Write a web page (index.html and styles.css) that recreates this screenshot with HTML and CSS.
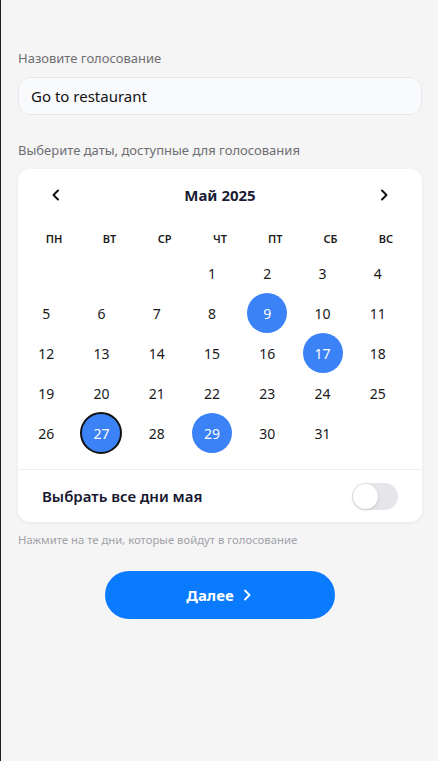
FILE: index.html
```html
<!DOCTYPE html>
<html lang="ru">
<head>
<meta charset="utf-8">
<title>Голосование</title>
<link rel="stylesheet" href="styles.css">
</head>
<body>
<div class="page">
  <div class="label">Назовите голосование</div>
  <div class="input">Go to restaurant</div>
  <div class="label label-2">Выберите даты, доступные для голосования</div>
  <div class="card">
    <div class="cal-head">
      <svg class="arrow" width="16" height="16" viewBox="0 0 16 16"><path d="M10 3.5 L5.5 8 L10 12.5" fill="none" stroke="#111" stroke-width="2" stroke-linecap="round" stroke-linejoin="round"/></svg>
      <div class="month">Май 2025</div>
      <svg class="arrow" width="16" height="16" viewBox="0 0 16 16"><path d="M6 3.5 L10.5 8 L6 12.5" fill="none" stroke="#111" stroke-width="2" stroke-linecap="round" stroke-linejoin="round"/></svg>
    </div>
    <div class="weekdays">
      <span>ПН</span><span>ВТ</span><span>СР</span><span>ЧТ</span><span>ПТ</span><span>СБ</span><span>ВС</span>
    </div>
    <div class="days">
      <span></span><span></span><span></span>
      <span class="day">1</span><span class="day">2</span><span class="day">3</span><span class="day">4</span>
      <span class="day">5</span><span class="day">6</span><span class="day">7</span><span class="day">8</span><span class="day sel">9</span><span class="day">10</span><span class="day">11</span>
      <span class="day">12</span><span class="day">13</span><span class="day">14</span><span class="day">15</span><span class="day">16</span><span class="day sel">17</span><span class="day">18</span>
      <span class="day">19</span><span class="day">20</span><span class="day">21</span><span class="day">22</span><span class="day">23</span><span class="day">24</span><span class="day">25</span>
      <span class="day">26</span><span class="day sel today">27</span><span class="day">28</span><span class="day sel">29</span><span class="day">30</span><span class="day">31</span><span></span>
    </div>
    <div class="card-foot">
      <div class="foot-label">Выбрать все дни мая</div>
      <div class="toggle"><div class="knob"></div></div>
    </div>
  </div>
  <div class="hint">Нажмите на те дни, которые войдут в голосование</div>
  <div class="btn-row">
    <button class="btn">Далее
      <svg width="14" height="14" viewBox="0 0 14 14"><path d="M5 2.5 L9.5 7 L5 11.5" fill="none" stroke="#fff" stroke-width="1.8" stroke-linecap="round" stroke-linejoin="round"/></svg>
    </button>
  </div>
</div>
</body>
</html>
```

FILE: styles.css
```css
* { box-sizing: border-box; }
html, body { margin: 0; padding: 0; }
body {
  background: #f5f5f5;
  font-family: "Noto Sans", "Open Sans", "Liberation Sans", sans-serif;
  color: #1a1a1a;
}
.page {
  min-height: 761px;
  border-left: 1px solid #1e1e1e;
  padding: 49px 16px 0 17px;
}
.label {
  font-size: 13px;
  line-height: 18px;
  color: #6e6e73;
}
.label-2 { margin-top: 26px; }
.input {
  margin-top: 10px;
  height: 38px;
  border: 1px solid #e6e8ec;
  background: #f9fafc;
  border-radius: 12px;
  padding: 0 12px;
  display: flex;
  align-items: center;
  font-size: 15px;
  color: #111;
}
.card {
  margin-top: 10px;
  background: #fff;
  border-radius: 12px;
  box-shadow: 0 1px 4px rgba(0,0,0,0.05);
  padding-top: 14px;
}
.cal-head {
  height: 24px;
  padding: 0 30px;
  display: flex;
  align-items: center;
  justify-content: space-between;
}
.month {
  font-size: 15px;
  font-weight: 700;
  color: #1c1c36;
}
.weekdays {
  margin-top: 21px;
  padding: 0 8.5px;
  display: grid;
  grid-template-columns: repeat(7, 1fr);
  height: 20px;
  align-items: center;
}
.weekdays span {
  text-align: center;
  font-size: 11px;
  font-weight: 600;
  color: #1a1a1a;
}
.days {
  margin-top: 5px;
  padding: 0 16.5px 0 0.5px;
  display: grid;
  grid-template-columns: repeat(7, 1fr);
  grid-auto-rows: 40px;
}
.day {
  display: flex;
  align-items: center;
  justify-content: center;
  font-size: 14px;
  color: #1a1a1a;
  justify-self: center;
  width: 40px;
  height: 40px;
  border-radius: 50%;
}
.day.sel {
  background: #3b82f6;
  color: #fff;
}
.day.today {
  width: 42px;
  height: 42px;
  margin-top: -1px;
  border: 2px solid #111;
}
.card-foot {
  margin-top: 16px;
  border-top: 1px solid #eeeeef;
  height: 53px;
  padding: 0 24px 0 24px;
  display: flex;
  align-items: center;
  justify-content: space-between;
}
.foot-label {
  font-size: 15px;
  font-weight: 600;
  color: #161630;
}
.toggle {
  width: 46px;
  height: 27px;
  border-radius: 14px;
  background: #e6e6ea;
  padding: 1px;
}
.knob {
  width: 25px;
  height: 25px;
  border-radius: 50%;
  background: #fff;
  box-shadow: 0 1px 3px rgba(0,0,0,0.15);
}
.hint {
  margin-top: 9px;
  font-size: 11.3px;
  line-height: 18px;
  color: #a2a2aa;
}
.btn-row {
  margin-top: 22px;
  display: flex;
  justify-content: center;
}
.btn {
  width: 230px;
  height: 48px;
  border: none;
  border-radius: 24px;
  background: #0a7aff;
  color: #fff;
  font-family: inherit;
  font-size: 15px;
  font-weight: 700;
  display: flex;
  align-items: center;
  justify-content: center;
  gap: 6px;
  padding: 0;
}
```
